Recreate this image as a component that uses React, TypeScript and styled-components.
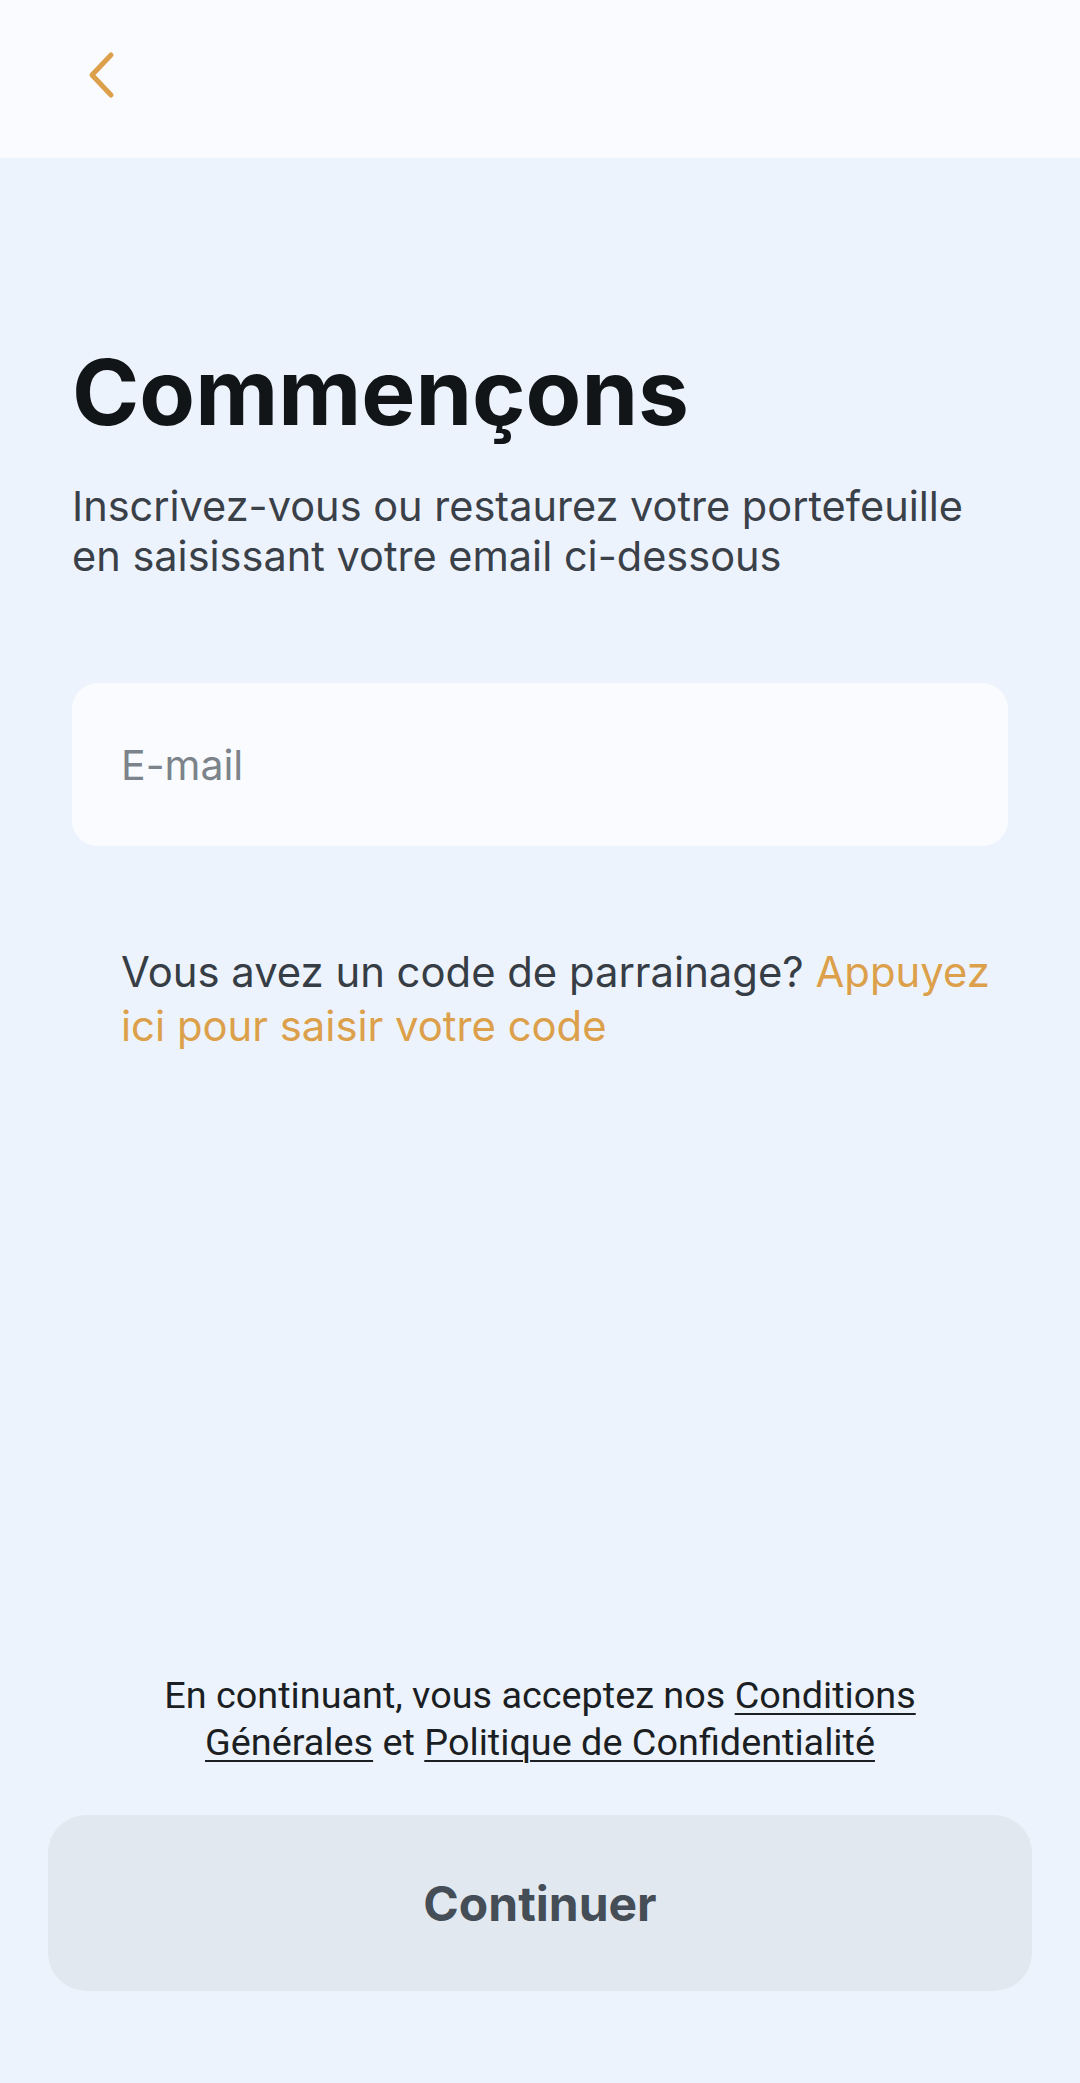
import React from "react";
import styled, { createGlobalStyle } from "styled-components";

const GlobalStyle = createGlobalStyle`
  html, body {
    margin: 0;
    padding: 0;
    background: #edf3fc;
  }
  * {
    box-sizing: border-box;
  }
`;

const Screen = styled.div`
  min-height: 2083px;
  display: flex;
  flex-direction: column;
  background: #edf3fc;
  font-family: Inter, "Noto Sans", sans-serif;
`;

const TopBar = styled.header`
  height: 158px;
  flex-shrink: 0;
  display: flex;
  align-items: center;
  padding-left: 88px;
  background: #f9fbfe;
`;

const BackButton = styled.button`
  border: 0;
  padding: 0;
  margin-bottom: 9px;
  background: none;
  display: flex;
  cursor: pointer;
`;

const Content = styled.main`
  display: flex;
  flex-direction: column;
  padding: 0 72px;
`;

const Title = styled.h1`
  margin: 181px 0 0;
  font-size: 91px;
  line-height: 106px;
  font-weight: 700;
  color: #111518;
`;

const Subtitle = styled.p`
  margin: 36px 0 0;
  font-size: 41.5px;
  line-height: 50px;
  color: #3a4048;
`;

const EmailInput = styled.input`
  margin-top: 102px;
  height: 163px;
  width: 100%;
  border: 0;
  border-radius: 26px;
  background: #f9fbfe;
  padding: 0 49px;
  font-family: Inter, "Noto Sans", sans-serif;
  font-size: 41px;
  color: #1b1f23;
  outline: none;
  &::placeholder {
    color: #7c838a;
  }
`;

const Referral = styled.p`
  margin: 99px 0 0;
  padding-left: 49px;
  font-size: 41.8px;
  line-height: 54px;
  color: #363d45;
`;

const Link = styled.span`
  color: #dca04b;
  cursor: pointer;
`;

const Footer = styled.footer`
  margin-top: auto;
  display: flex;
  flex-direction: column;
  align-items: center;
  padding: 0 48px 92px;
`;

const Terms = styled.p`
  margin: 0;
  max-width: 840px;
  text-align: center;
  font-family: Roboto, "Liberation Sans", sans-serif;
  font-size: 37.8px;
  line-height: 47px;
  color: #1b1f23;
  a {
    color: inherit;
    text-decoration: underline;
    text-decoration-thickness: 2px;
    text-underline-offset: 5px;
  }
`;

const ContinueButton = styled.button`
  margin-top: 49px;
  width: 100%;
  height: 176px;
  border: 0;
  border-radius: 38px;
  background: #e1e8f0;
  font-family: Inter, "Noto Sans", sans-serif;
  font-size: 48px;
  font-weight: 700;
  color: #454d56;
`;

const ChevronLeft = () => (
  <svg width="28" height="48" viewBox="0 0 28 48" fill="none">
    <path
      d="M23 4 L4 24 L23 44"
      stroke="#dca04b"
      strokeWidth="5"
      strokeLinecap="round"
      strokeLinejoin="round"
    />
  </svg>
);

export default function App() {
  return (
    <>
      <GlobalStyle />
      <Screen>
        <TopBar>
          <BackButton aria-label="Retour">
            <ChevronLeft />
          </BackButton>
        </TopBar>
        <Content>
          <Title>Commençons</Title>
          <Subtitle>
            Inscrivez-vous ou restaurez votre portefeuille en saisissant votre
            email ci-dessous
          </Subtitle>
          <EmailInput type="email" placeholder="E-mail" />
          <Referral>
            Vous avez un code de parrainage?{" "}
            <Link>Appuyez ici pour saisir votre code</Link>
          </Referral>
        </Content>
        <Footer>
          <Terms>
            En continuant, vous acceptez nos <a>Conditions Générales</a> et{" "}
            <a>Politique de Confidentialité</a>
          </Terms>
          <ContinueButton>Continuer</ContinueButton>
        </Footer>
      </Screen>
    </>
  );
}
